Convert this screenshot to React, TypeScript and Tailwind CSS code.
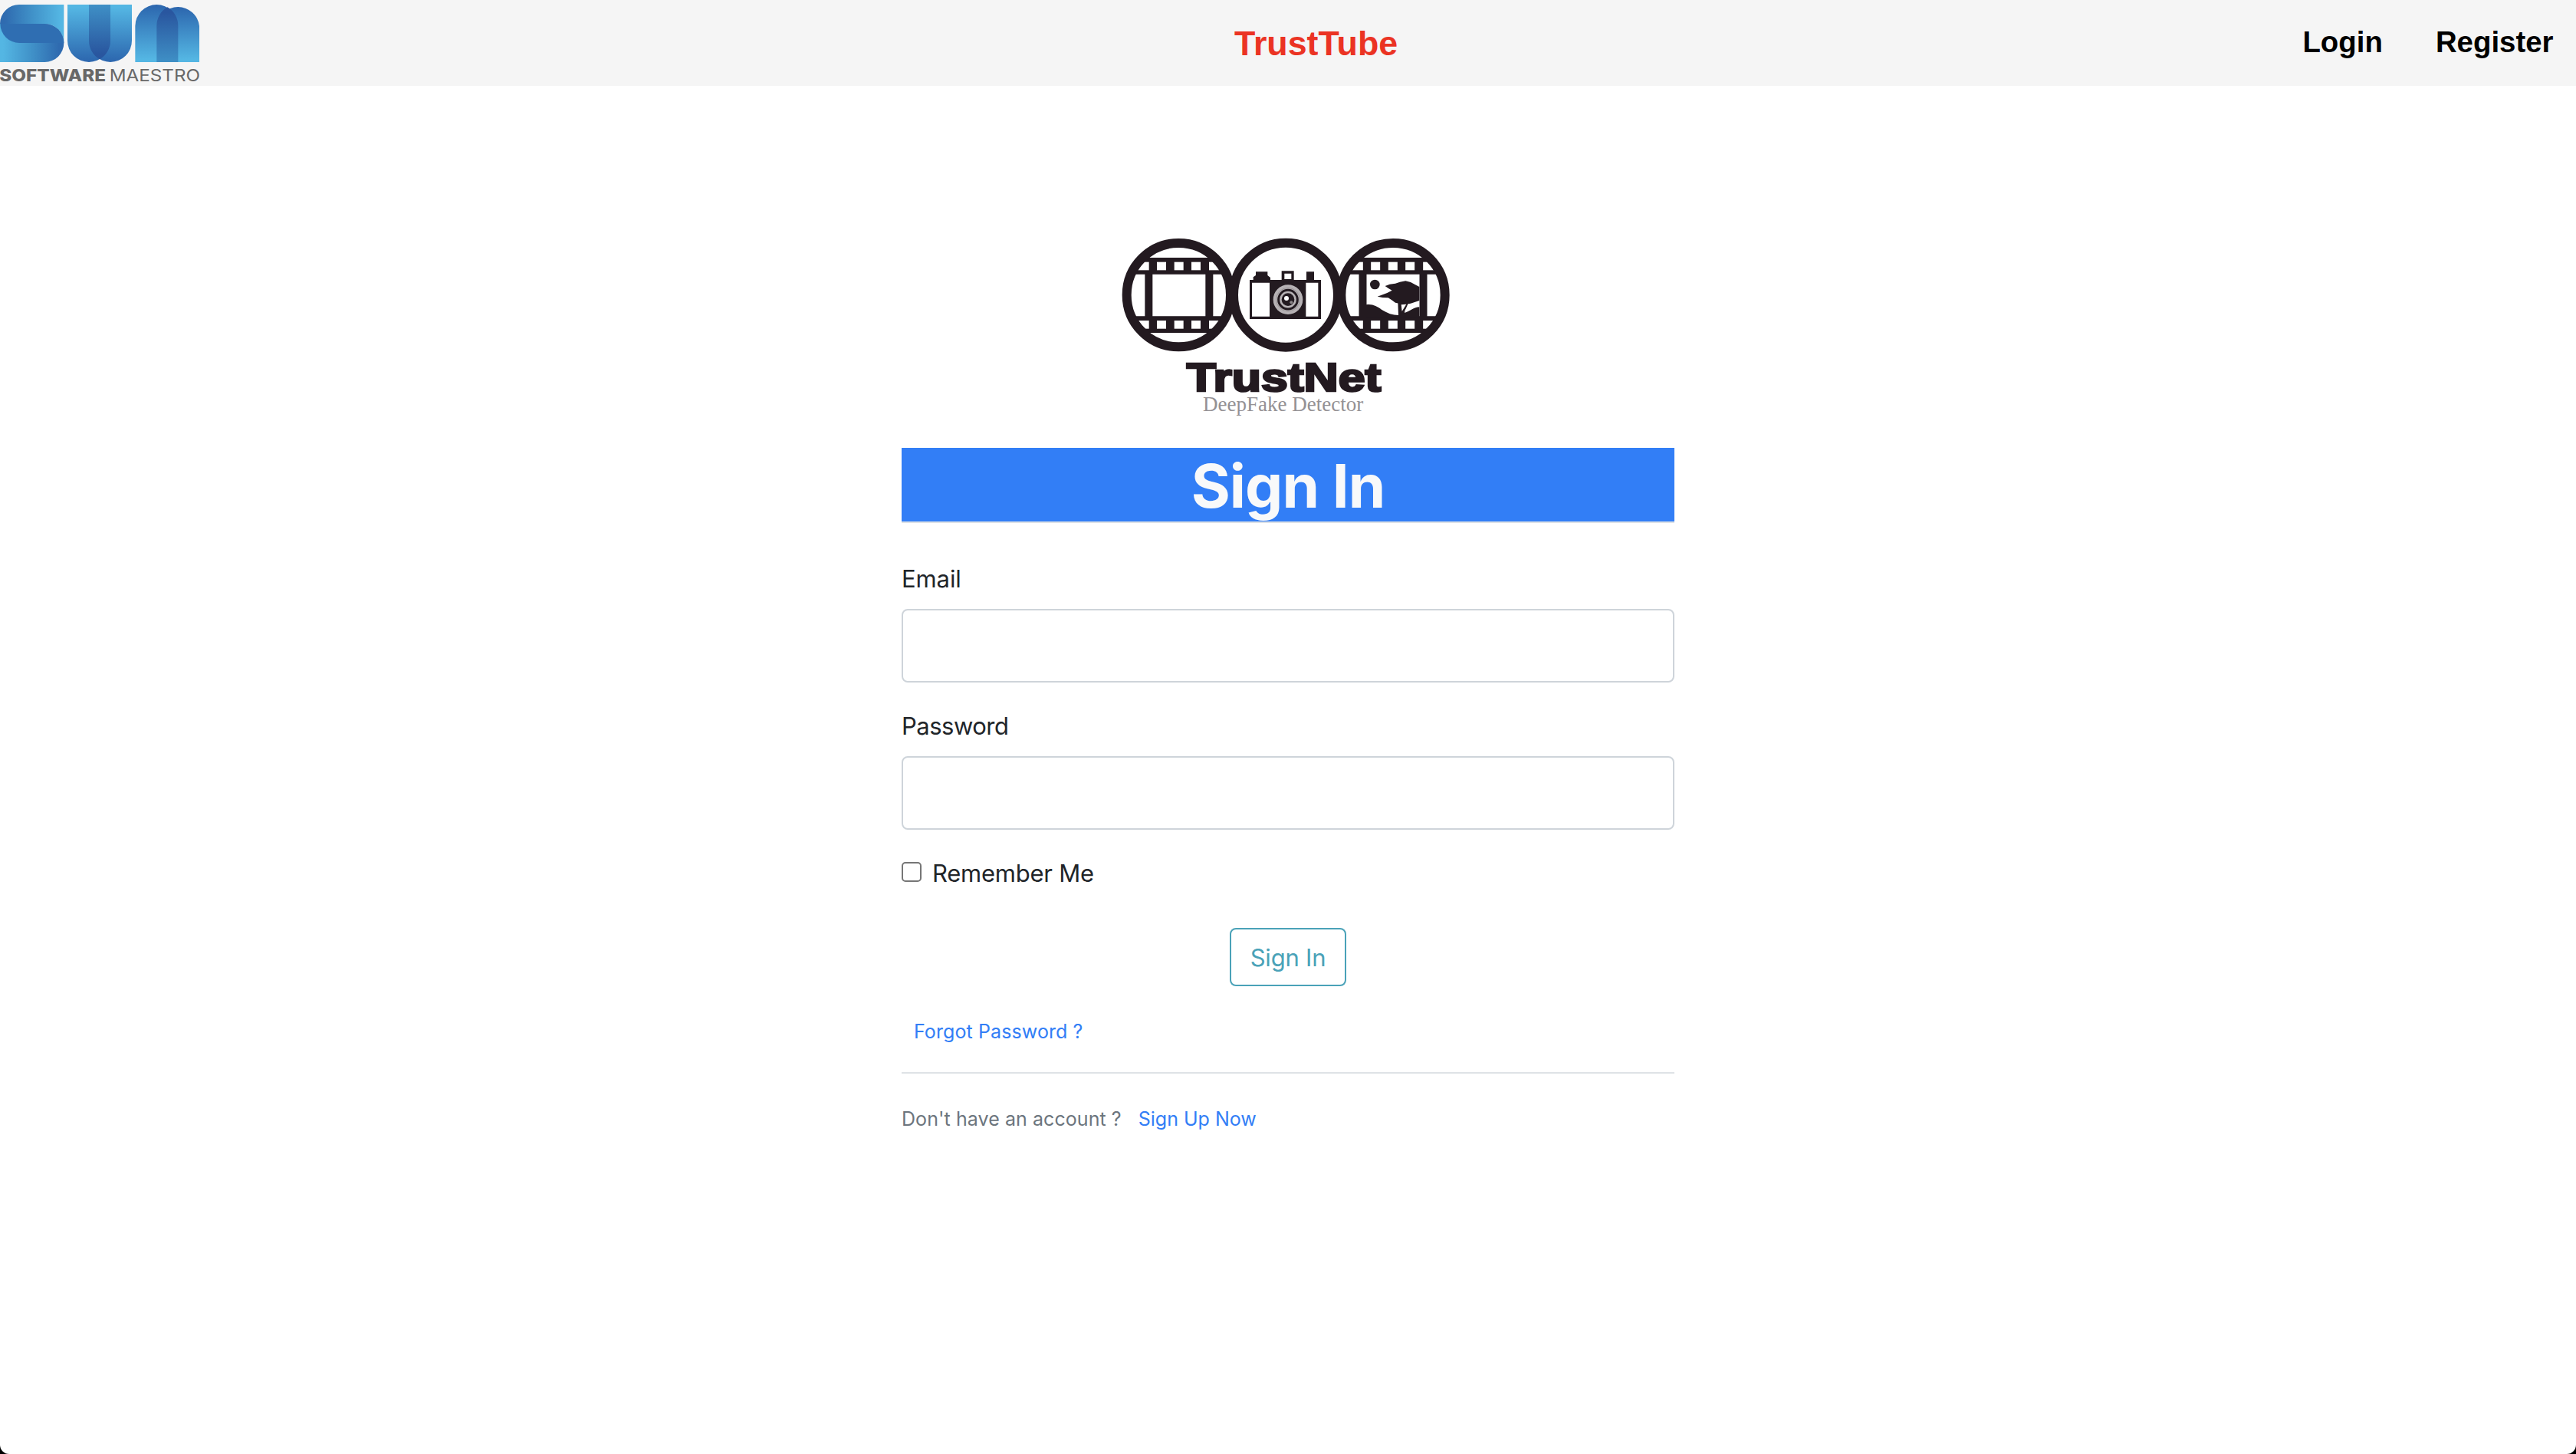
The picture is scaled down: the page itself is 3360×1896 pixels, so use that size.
function MaestroLogo() {
  return (
    <svg viewBox="0 0 780 336" className="h-[112px] w-[260px] shrink-0" role="img">
      <defs>
        <linearGradient id="toRight" x1="0" x2="1" y1="0" y2="0">
          <stop offset="0.08" stopColor="#2f6bb0" />
          <stop offset="0.5" stopColor="#4091c8" />
          <stop offset="0.95" stopColor="#54b6e3" />
        </linearGradient>
        <linearGradient id="toLeft" x1="1" x2="0" y1="0" y2="0">
          <stop offset="0.08" stopColor="#2f6bb0" />
          <stop offset="0.5" stopColor="#4091c8" />
          <stop offset="0.95" stopColor="#54b6e3" />
        </linearGradient>
        <linearGradient id="down" x1="0" x2="0" y1="0" y2="1">
          <stop offset="0.05" stopColor="#54b6e3" />
          <stop offset="1" stopColor="#2c66ae" />
        </linearGradient>
        <linearGradient id="up" x1="0" x2="0" y1="1" y2="0">
          <stop offset="0.05" stopColor="#54b6e3" />
          <stop offset="1" stopColor="#2c66ae" />
        </linearGradient>
        <linearGradient id="overDown" x1="0" x2="0" y1="0" y2="1">
          <stop offset="0" stopColor="#3f90c6" />
          <stop offset="0.9" stopColor="#29569f" />
        </linearGradient>
        <linearGradient id="overUp" x1="0" x2="0" y1="1" y2="0">
          <stop offset="0" stopColor="#3f90c6" />
          <stop offset="0.9" stopColor="#29569f" />
        </linearGradient>
      </defs>
      <path d="M0 93V243H175A75 75 0 0 0 175 93Z" fill="url(#toLeft)" />
      <path d="M250 18H76A75 75 0 0 0 0 93H175A75 75 0 0 1 250 168Z" fill="url(#toRight)" />
      <path d="M1 93A75 75 0 0 0 76 168H250A75 75 0 0 0 175 93Z" fill="#2f6eb2" />
      <path d="M264 18V159A84 84 0 0 0 432 159V18Z" fill="url(#down)" />
      <path d="M348 18V159A84 84 0 0 0 516 159V18Z" fill="url(#down)" />
      <path d="M348 18V159A84 84 0 0 0 390 232A84 84 0 0 0 432 159V18Z" fill="url(#overDown)" />
      <path d="M529 243V102A84 84 0 0 1 697 102V243Z" fill="url(#up)" />
      <path d="M613 243V102A84 84 0 0 1 780 102V243Z" fill="url(#up)" />
      <path d="M613 243V102A84 84 0 0 1 655 28A84 84 0 0 1 697 102V243Z" fill="url(#overUp)" />
      <g fill="#686868" fontFamily="Inter, sans-serif" fontSize="65">
        <text x="-2" y="317" fontWeight="800" textLength="416" lengthAdjust="spacingAndGlyphs">
          SOFTWARE
        </text>
        <text x="428" y="317" fontWeight="400" textLength="355" lengthAdjust="spacingAndGlyphs">
          MAESTRO
        </text>
      </g>
    </svg>
  );
}

const INK = "#231a20";

function FilmStrip() {
  return (
    <g>
      <path d="M105 138H480V203H105ZM105 367H480V432H105ZM160 203H190V367H160ZM397 203H427V367H397Z" fill={INK} />
      <g fill="#fff">
        {[155, 384].map((y) =>
          [110, 207, 275, 342, 411].map((x) => (
            <rect key={`${x}-${y}`} x={x} y={y} width={x === 110 ? 66 : x === 411 ? 60 : 36} height={32} />
          )),
        )}
      </g>
    </g>
  );
}

function TrustNetLogo() {
  return (
    <svg viewBox="0 0 1440 810" className="h-[270px] w-[480px]" role="img">
      <defs>
        <clipPath id="lens">
          <circle cx="292" cy="284" r="204" />
        </clipPath>
      </defs>
      <g clipPath="url(#lens)">
        <FilmStrip />
      </g>
      <g transform="translate(837.5 0)">
        <g clipPath="url(#lens)">
          <FilmStrip />
        </g>
      </g>
      <g fill="none" stroke={INK} strokeWidth="36">
        <circle cx="292" cy="284" r="203" />
        <circle cx="711" cy="284" r="204" />
        <circle cx="1131" cy="284" r="203" />
      </g>

      <path d="M584 225V214L594 207V193H640V207L651 216V225ZM695 190H743V225H695ZM792 193H822V225H792ZM570 225H849V378H570Z" fill={INK} />
      <path d="M706 200H733V222H706ZM579 236H648V368H579ZM790 236H838V368H790Z" fill="#fff" />
      <circle cx="720" cy="302" r="58" fill="#b7b2b5" />
      <circle cx="720" cy="302" r="46" fill="none" stroke="#8b8588" strokeWidth="2" />
      <circle cx="720" cy="302" r="37" fill="none" stroke={INK} strokeWidth="9" />
      <circle cx="720" cy="302" r="25" fill={INK} />
      <circle cx="714" cy="297" r="9" fill="#fff" />
      <circle cx="733" cy="313" r="6" fill="#8b8588" />

      <circle cx="1060" cy="243" r="19" fill={INK} />
      <path
        d="M1070 290L1108 276L1127 266L1113 258L1100 249L1118 242L1140 239L1158 233L1180 229L1200 234L1218 244L1234 252V306L1218 311L1200 317L1180 320L1158 318L1140 314L1126 304L1112 295L1090 294Z"
        fill={INK}
      />
      <path
        d="M1026 322C1050 318 1068 328 1086 341C1108 355 1130 363 1152 363L1150 312H1192L1176 354C1196 348 1212 332 1234 331V370H1026Z"
        fill={INK}
      />
      <path d="M1163 322L1183 320L1166 348ZM1174 352L1188 324L1196 322L1188 338Z" fill="#fff" />

      <text
        x="323"
        y="661"
        fontFamily="'Liberation Sans', Arial, sans-serif"
        fontWeight="700"
        fontSize="154"
        fill={INK}
        stroke={INK}
        strokeWidth="8"
        textLength="761"
        lengthAdjust="spacingAndGlyphs"
      >
        TrustNet
      </text>
      <text
        x="387"
        y="738"
        fontFamily="'Liberation Serif', 'Times New Roman', serif"
        fontSize="80"
        fill="#949194"
        textLength="628"
        lengthAdjust="spacingAndGlyphs"
      >
        DeepFake Detector
      </text>
    </svg>
  );
}

function Field({ id, label, type, tracking }: { id: string; label: string; type: string; tracking: string }) {
  return (
    <div className="mt-8">
      <label htmlFor={id} className={`block h-12 text-[31px] leading-[50px] ${tracking}`}>
        {label}
      </label>
      <input
        id={id}
        type={type}
        className="mt-4 block h-24 w-full rounded-lg border-2 border-[#ced4da] bg-white px-6 text-[31px] outline-none"
      />
    </div>
  );
}

export default function App() {
  return (
    <div className="bg-black">
      <div className="flex h-[1896px] w-full flex-col overflow-hidden rounded-b-[12px] bg-white font-['Inter',sans-serif] text-[#212529]">
        <header className="flex h-28 w-full shrink-0 items-center bg-[#f5f5f5] font-['Liberation_Sans',Arial,sans-serif] font-bold">
          <MaestroLogo />
          <a href="#" className="ml-[1350px] text-[44.8px] leading-[52px] text-[#eb3323]">
            TrustTube
          </a>
          <nav className="ml-auto flex gap-[69px] pr-[29.5px] pb-[3px] text-[38.4px] leading-[44px] text-black">
            <a href="#">Login</a>
            <a href="#">Register</a>
          </nav>
        </header>

        <main className="mx-auto flex w-[1008px] flex-col pt-[178px]">
          <div className="flex justify-center">
            <TrustNetLogo />
          </div>
          <h1 className="mt-6 h-[98px] border-b-2 border-[#dee2e6] bg-[#327ef6] text-center text-[78px] leading-[99px] font-bold tracking-[-0.9px] text-[#f8f9fa]">
            Sign In
          </h1>

          <form onSubmit={(e) => e.preventDefault()}>
            <div className="mt-12">
              <Field id="email" label="Email" type="email" tracking="tracking-[-0.1px]" />
              <Field id="password" label="Password" type="password" tracking="tracking-[-0.5px]" />
            </div>

            <label className="mt-8 flex h-12 items-center">
              <input
                type="checkbox"
                className="mb-[2px] size-[26px] appearance-none rounded-[5px] border-2 border-[#767676] bg-white"
              />
              <span className="ml-3.5 h-12 text-[31px] leading-[50px] tracking-[-0.24px]">Remember Me</span>
            </label>

            <div className="mt-12 flex justify-center">
              <button
                type="submit"
                className="h-[76px] w-[152px] rounded-lg border-2 border-[#4aa2b8] pt-px text-[31px] leading-[48px] tracking-[-0.2px] text-[#4aa2b8]"
              >
                Sign In
              </button>
            </div>
          </form>

          <div className="mt-10 h-[38px] pl-4 text-[25px] leading-[38px] tracking-[0.1px] text-[#327ef6]">
            <a href="#">Forgot Password ?</a>
          </div>
          <div className="mt-[34px] flex border-t-2 border-[#dee2e6] pt-10 text-[25px] leading-[38px]">
            <span className="tracking-[0.07px] text-[#6c757d]">Don't have an account ?</span>
            <a href="#" className="ml-[22px] text-[#327ef6]">
              Sign Up Now
            </a>
          </div>
        </main>
      </div>
    </div>
  );
}
